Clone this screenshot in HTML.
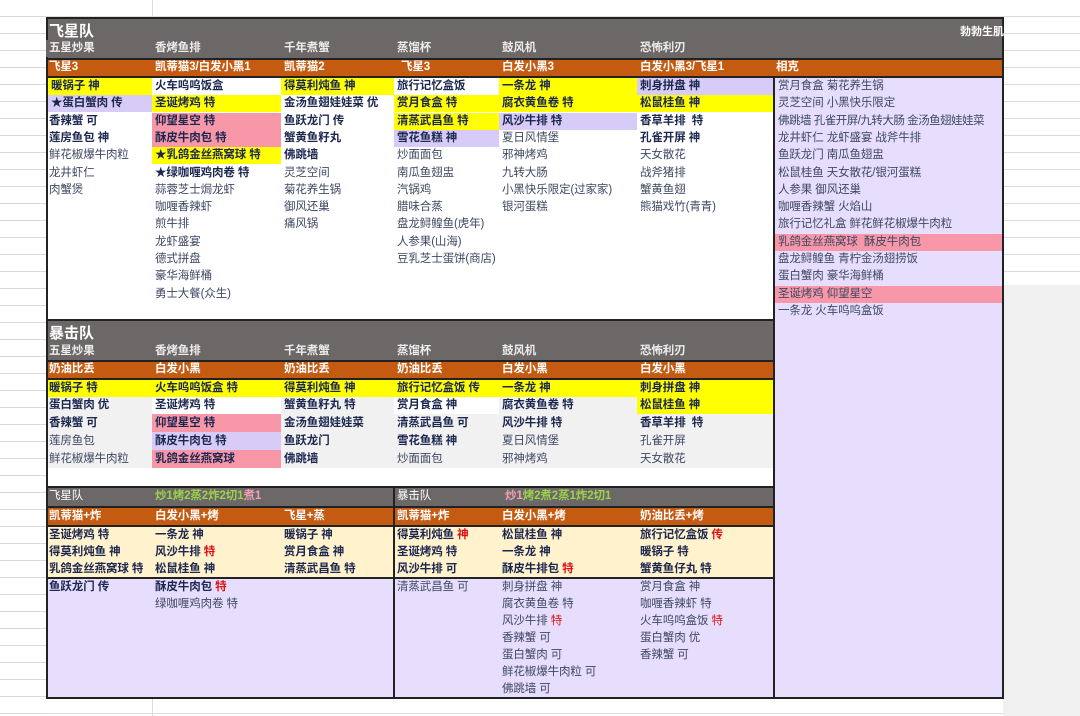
<!DOCTYPE html>
<html><head><meta charset="utf-8"><style>
*{margin:0;padding:0;box-sizing:border-box}
body{width:1080px;height:716px;overflow:hidden;position:relative;background:#fff;font-family:"Liberation Sans","Noto Sans CJK SC",sans-serif;
background-image:repeating-linear-gradient(to bottom,transparent 0,transparent 16px,#dcdcdc 16px,#dcdcdc 17px),linear-gradient(to right,transparent 0,transparent 152px,#dcdcdc 152px,#dcdcdc 153px,transparent 153px);}
.a{position:absolute}
.c{position:absolute;height:17px;line-height:17px;font-size:11.5px;padding-left:3px;white-space:nowrap;color:#3e4863;letter-spacing:-0.1px}
.b{font-weight:bold;color:#1c2750}
.Y{background:#ffff00}.L{background:#d6ccf7}.P{background:#f797a8}.G{background:#f1f1f1}.W{background:#fff}
.gh{background:#6c6868;color:#ececec;font-weight:bold}
.or{background:#c55a11;color:#fff;font-weight:bold}
.r{color:#e01010;font-weight:bold}
.rn{color:#e01010}
</style></head><body>
<div class="a" style="left:1003px;top:285px;width:77px;height:431px;background:#f0f0f0"></div>
<div class="a" style="left:0;top:0;width:46px;height:716px;background-image:repeating-linear-gradient(to bottom,#fff 0,#fff 16px,#d8d8d8 16px,#d8d8d8 17px)"></div>
<div class="a" style="left:46px;top:17px;width:958px;height:682px;border:2px solid #222;background:#fff"></div>
<div class="a gh" style="left:48px;top:19px;width:954px;height:39px"></div>
<div class="a" style="left:49px;top:20px;font-size:15px;font-weight:bold;color:#fff">飞星队</div>
<div class="a" style="left:960px;top:23px;font-size:11px;font-weight:bold;color:#fff">勃勃生肌</div>
<div class="c gh" style="left:46px;top:40px">五星炒果</div>
<div class="c gh" style="left:152px;top:40px">香烤鱼排</div>
<div class="c gh" style="left:281px;top:40px">千年煮蟹</div>
<div class="c gh" style="left:394px;top:40px">蒸馏杯</div>
<div class="c gh" style="left:499px;top:40px">鼓风机</div>
<div class="c gh" style="left:637px;top:40px">恐怖利刃</div>
<div class="a or" style="left:48px;top:58px;width:954px;height:20px;border-top:2px solid #222;border-bottom:2px solid #222"></div>
<div class="c or" style="left:46px;top:59px;background:none">飞星3</div>
<div class="c or" style="left:152px;top:59px;background:none">凯蒂猫3/白发小黑1</div>
<div class="c or" style="left:281px;top:59px;background:none">凯蒂猫2</div>
<div class="c or" style="left:398px;top:59px;background:none">飞星3</div>
<div class="c or" style="left:499px;top:59px;background:none">白发小黑3</div>
<div class="c or" style="left:637px;top:59px;background:none">白发小黑3/飞星1</div>
<div class="c or" style="left:773px;top:59px;background:none">相克</div>
<div class="a" style="left:773px;top:78px;width:229px;height:619px;background:#e7defd;border-left:2px solid #222"></div>
<div class="c b Y" style="left:48px;top:78px;width:104px">暖锅子 神</div>
<div class="c b L" style="left:48px;top:95px;width:104px">★蛋白蟹肉 传</div>
<div class="c b" style="left:46px;top:113px">香辣蟹 可</div>
<div class="c b" style="left:46px;top:130px">莲房鱼包 神</div>
<div class="c" style="left:46px;top:147px">鲜花椒爆牛肉粒</div>
<div class="c" style="left:46px;top:165px">龙井虾仁</div>
<div class="c" style="left:46px;top:182px">肉蟹煲</div>
<div class="c b" style="left:152px;top:78px">火车呜呜饭盒</div>
<div class="c b Y" style="left:152px;top:95px;width:129px">圣诞烤鸡 特</div>
<div class="c b P" style="left:152px;top:113px;width:129px">仰望星空 特</div>
<div class="c b P" style="left:152px;top:130px;width:129px">酥皮牛肉包 特</div>
<div class="c b Y" style="left:152px;top:147px;width:129px">★乳鸽金丝燕窝球 特</div>
<div class="c b" style="left:152px;top:165px">★绿咖喱鸡肉卷 特</div>
<div class="c" style="left:152px;top:182px">蒜蓉芝士焗龙虾</div>
<div class="c" style="left:152px;top:199px">咖喱香辣虾</div>
<div class="c" style="left:152px;top:216px">煎牛排</div>
<div class="c" style="left:152px;top:234px">龙虾盛宴</div>
<div class="c" style="left:152px;top:251px">德式拼盘</div>
<div class="c" style="left:152px;top:268px">豪华海鲜桶</div>
<div class="c" style="left:152px;top:286px">勇士大餐(众生)</div>
<div class="c b Y" style="left:281px;top:78px;width:113px">得莫利炖鱼 神</div>
<div class="c b" style="left:281px;top:95px">金汤鱼翅娃娃菜 优</div>
<div class="c b" style="left:281px;top:113px">鱼跃龙门 传</div>
<div class="c b" style="left:281px;top:130px">蟹黄鱼籽丸</div>
<div class="c b" style="left:281px;top:147px">佛跳墙</div>
<div class="c" style="left:281px;top:165px">灵芝空间</div>
<div class="c" style="left:281px;top:182px">菊花养生锅</div>
<div class="c" style="left:281px;top:199px">御风还巢</div>
<div class="c" style="left:281px;top:216px">痛风锅</div>
<div class="c b" style="left:394px;top:78px">旅行记忆盒饭</div>
<div class="c b Y" style="left:394px;top:95px;width:105px">赏月食盒 特</div>
<div class="c b Y" style="left:394px;top:113px;width:105px">清蒸武昌鱼 特</div>
<div class="c b L" style="left:394px;top:130px;width:105px">雪花鱼糕 神</div>
<div class="c" style="left:394px;top:147px">炒面面包</div>
<div class="c" style="left:394px;top:165px">南瓜鱼翅盅</div>
<div class="c" style="left:394px;top:182px">汽锅鸡</div>
<div class="c" style="left:394px;top:199px">腊味合蒸</div>
<div class="c" style="left:394px;top:216px">盘龙鲟鳇鱼(虎年)</div>
<div class="c" style="left:394px;top:234px">人参果(山海)</div>
<div class="c" style="left:394px;top:251px">豆乳芝士蛋饼(商店)</div>
<div class="c b Y" style="left:499px;top:78px;width:138px">一条龙 神</div>
<div class="c b Y" style="left:499px;top:95px;width:138px">腐衣黄鱼卷 特</div>
<div class="c b L" style="left:499px;top:113px;width:138px">风沙牛排 特</div>
<div class="c" style="left:499px;top:130px">夏日风情堡</div>
<div class="c" style="left:499px;top:147px">邪神烤鸡</div>
<div class="c" style="left:499px;top:165px">九转大肠</div>
<div class="c" style="left:499px;top:182px">小黑快乐限定(过家家)</div>
<div class="c" style="left:499px;top:199px">银河蛋糕</div>
<div class="c b L" style="left:637px;top:78px;width:136px">刺身拼盘 神</div>
<div class="c b Y" style="left:637px;top:95px;width:136px">松鼠桂鱼 神</div>
<div class="c b" style="left:637px;top:113px">香草羊排&nbsp; 特</div>
<div class="c b" style="left:637px;top:130px">孔雀开屏 神</div>
<div class="c" style="left:637px;top:147px">天女散花</div>
<div class="c" style="left:637px;top:165px">战斧猪排</div>
<div class="c" style="left:637px;top:182px">蟹黄鱼翅</div>
<div class="c" style="left:637px;top:199px">熊猫戏竹(青青)</div>
<div class="c" style="left:775px;top:78px">赏月食盒 菊花养生锅</div>
<div class="c" style="left:775px;top:95px">灵芝空间 小黑快乐限定</div>
<div class="c" style="left:775px;top:113px;letter-spacing:-0.5px">佛跳墙 孔雀开屏/九转大肠 金汤鱼翅娃娃菜</div>
<div class="c" style="left:775px;top:130px">龙井虾仁 龙虾盛宴 战斧牛排</div>
<div class="c" style="left:775px;top:147px">鱼跃龙门 南瓜鱼翅盅</div>
<div class="c" style="left:775px;top:165px">松鼠桂鱼 天女散花/银河蛋糕</div>
<div class="c" style="left:775px;top:182px">人参果 御风还巢</div>
<div class="c" style="left:775px;top:199px">咖喱香辣蟹 火焰山</div>
<div class="c" style="left:775px;top:216px">旅行记忆礼盒 鲜花鲜花椒爆牛肉粒</div>
<div class="c P" style="left:775px;top:234px;width:227px">乳鸽金丝燕窝球&nbsp; 酥皮牛肉包</div>
<div class="c" style="left:775px;top:251px">盘龙鲟鳇鱼 青柠金汤翅捞饭</div>
<div class="c" style="left:775px;top:268px">蛋白蟹肉 豪华海鲜桶</div>
<div class="c P" style="left:775px;top:286px;width:227px">圣诞烤鸡 仰望星空</div>
<div class="c" style="left:775px;top:303px">一条龙 火车呜呜盒饭</div>

<div class="a" style="left:48px;top:319px;width:725px;height:2px;background:#222"></div>
<div class="a gh" style="left:48px;top:321px;width:725px;height:39px"></div>
<div class="a" style="left:49px;top:322px;font-size:15px;font-weight:bold;color:#fff">暴击队</div>
<div class="c gh" style="left:46px;top:343px;background:none">五星炒果</div>
<div class="c gh" style="left:152px;top:343px;background:none">香烤鱼排</div>
<div class="c gh" style="left:281px;top:343px;background:none">千年煮蟹</div>
<div class="c gh" style="left:394px;top:343px;background:none">蒸馏杯</div>
<div class="c gh" style="left:499px;top:343px;background:none">鼓风机</div>
<div class="c gh" style="left:637px;top:343px;background:none">恐怖利刃</div>
<div class="a or" style="left:48px;top:360px;width:725px;height:20px;border-top:2px solid #222;border-bottom:2px solid #222"></div>
<div class="c or" style="left:46px;top:361px;background:none">奶油比丢</div>
<div class="c or" style="left:152px;top:361px;background:none">白发小黑</div>
<div class="c or" style="left:281px;top:361px;background:none">奶油比丢</div>
<div class="c or" style="left:394px;top:361px;background:none">奶油比丢</div>
<div class="c or" style="left:499px;top:361px;background:none">白发小黑</div>
<div class="c or" style="left:637px;top:361px;background:none">白发小黑</div>
<div class="a G" style="left:48px;top:397px;width:725px;height:71px"></div>
<div class="a Y" style="left:48px;top:380px;width:725px;height:17px"></div>
<div class="a W" style="left:152px;top:397px;width:129px;height:17px"></div>
<div class="a W" style="left:394px;top:397px;width:105px;height:17px"></div>
<div class="a Y" style="left:637px;top:397px;width:136px;height:17px"></div>
<div class="a P" style="left:152px;top:414px;width:129px;height:18px"></div>
<div class="a L" style="left:152px;top:432px;width:129px;height:18px"></div>
<div class="a P" style="left:152px;top:450px;width:129px;height:18px"></div>
<div class="c b" style="left:46px;top:380px">暖锅子 特</div>
<div class="c b" style="left:46px;top:397px">蛋白蟹肉 优</div>
<div class="c b" style="left:46px;top:415px">香辣蟹 可</div>
<div class="c" style="left:46px;top:433px">莲房鱼包</div>
<div class="c" style="left:46px;top:451px">鲜花椒爆牛肉粒</div>
<div class="c b" style="left:152px;top:380px">火车呜呜饭盒 特</div>
<div class="c b" style="left:152px;top:397px">圣诞烤鸡 特</div>
<div class="c b" style="left:152px;top:415px">仰望星空 特</div>
<div class="c b" style="left:152px;top:433px">酥皮牛肉包 特</div>
<div class="c b" style="left:152px;top:451px">乳鸽金丝燕窝球</div>
<div class="c b" style="left:281px;top:380px">得莫利炖鱼 神</div>
<div class="c b" style="left:281px;top:397px">蟹黄鱼籽丸 特</div>
<div class="c b" style="left:281px;top:415px">金汤鱼翅娃娃菜</div>
<div class="c b" style="left:281px;top:433px">鱼跃龙门</div>
<div class="c b" style="left:281px;top:451px">佛跳墙</div>
<div class="c b" style="left:394px;top:380px">旅行记忆盒饭 传</div>
<div class="c b" style="left:394px;top:397px">赏月食盒 神</div>
<div class="c b" style="left:394px;top:415px">清蒸武昌鱼 可</div>
<div class="c b" style="left:394px;top:433px">雪花鱼糕 神</div>
<div class="c" style="left:394px;top:451px">炒面面包</div>
<div class="c b" style="left:499px;top:380px">一条龙 神</div>
<div class="c b" style="left:499px;top:397px">腐衣黄鱼卷 特</div>
<div class="c b" style="left:499px;top:415px">风沙牛排 特</div>
<div class="c" style="left:499px;top:433px">夏日风情堡</div>
<div class="c" style="left:499px;top:451px">邪神烤鸡</div>
<div class="c b" style="left:637px;top:380px">刺身拼盘 神</div>
<div class="c b" style="left:637px;top:397px">松鼠桂鱼 神</div>
<div class="c b" style="left:637px;top:415px">香草羊排&nbsp; 特</div>
<div class="c" style="left:637px;top:433px">孔雀开屏</div>
<div class="c" style="left:637px;top:451px">天女散花</div>

<div class="a" style="left:48px;top:486px;width:725px;height:2px;background:#222"></div>
<div class="a gh" style="left:48px;top:488px;width:725px;height:18px"></div>
<div class="c gh" style="left:46px;top:488px;background:none;font-weight:normal;color:#fff">飞星队</div>
<div class="c" style="left:152px;top:488px;font-weight:bold;color:#9bd34a">炒1烤2蒸2炸2切1<span style="color:#f2a0b4">煮1</span></div>
<div class="c gh" style="left:394px;top:488px;background:none;font-weight:normal;color:#fff">暴击队</div>
<div class="c" style="left:502px;top:488px;font-weight:bold;color:#9bd34a"><span style="color:#f2a0b4">炒1</span>烤2煮2蒸1炸2切1</div>
<div class="a or" style="left:48px;top:506px;width:725px;height:21px;border-top:2px solid #222;border-bottom:2px solid #222"></div>
<div class="c or" style="left:46px;top:508px;background:none">凯蒂猫+炸</div>
<div class="c or" style="left:152px;top:508px;background:none">白发小黑+烤</div>
<div class="c or" style="left:281px;top:508px;background:none">飞星+蒸</div>
<div class="c or" style="left:394px;top:508px;background:none">凯蒂猫+炸</div>
<div class="c or" style="left:499px;top:508px;background:none">白发小黑+烤</div>
<div class="c or" style="left:637px;top:508px;background:none">奶油比丢+烤</div>
<div class="a" style="left:48px;top:527px;width:725px;height:50px;background:#fff2cc"></div>
<div class="a" style="left:48px;top:577px;width:725px;height:2px;background:#222"></div>
<div class="a" style="left:48px;top:579px;width:725px;height:118px;background:#e7defd"></div>
<div class="a" style="left:393px;top:488px;width:2px;height:209px;background:#222"></div>
<div class="c b" style="left:46px;top:527px">圣诞烤鸡 特</div>
<div class="c b" style="left:46px;top:544px">得莫利炖鱼 神</div>
<div class="c b" style="left:46px;top:561px">乳鸽金丝燕窝球 特</div>
<div class="c b" style="left:46px;top:579px">鱼跃龙门 传</div>
<div class="c b" style="left:152px;top:527px">一条龙 神</div>
<div class="c b" style="left:152px;top:544px">风沙牛排 <span class="r">特</span></div>
<div class="c b" style="left:152px;top:561px">松鼠桂鱼 神</div>
<div class="c b" style="left:152px;top:579px">酥皮牛肉包 <span class="r">特</span></div>
<div class="c" style="left:152px;top:596px">绿咖喱鸡肉卷 特</div>
<div class="c b" style="left:281px;top:527px">暖锅子 神</div>
<div class="c b" style="left:281px;top:544px">赏月食盒 神</div>
<div class="c b" style="left:281px;top:561px">清蒸武昌鱼 特</div>
<div class="c b" style="left:394px;top:527px">得莫利炖鱼 <span class="r">神</span></div>
<div class="c b" style="left:394px;top:544px">圣诞烤鸡 特</div>
<div class="c b" style="left:394px;top:561px">风沙牛排 可</div>
<div class="c" style="left:394px;top:579px">清蒸武昌鱼 可</div>
<div class="c b" style="left:499px;top:527px">松鼠桂鱼 神</div>
<div class="c b" style="left:499px;top:544px">一条龙 神</div>
<div class="c b" style="left:499px;top:561px">酥皮牛排包 <span class="r">特</span></div>
<div class="c" style="left:499px;top:579px">刺身拼盘 神</div>
<div class="c" style="left:499px;top:596px">腐衣黄鱼卷 特</div>
<div class="c" style="left:499px;top:613px">风沙牛排 <span class="rn">特</span></div>
<div class="c" style="left:499px;top:630px">香辣蟹 可</div>
<div class="c" style="left:499px;top:647px">蛋白蟹肉 可</div>
<div class="c" style="left:499px;top:664px">鲜花椒爆牛肉粒 可</div>
<div class="c" style="left:499px;top:681px">佛跳墙 可</div>
<div class="c b" style="left:637px;top:527px">旅行记忆盒饭 <span class="r">传</span></div>
<div class="c b" style="left:637px;top:544px">暖锅子 特</div>
<div class="c b" style="left:637px;top:561px">蟹黄鱼仔丸 特</div>
<div class="c" style="left:637px;top:579px">赏月食盒 神</div>
<div class="c" style="left:637px;top:596px">咖喱香辣虾 特</div>
<div class="c" style="left:637px;top:613px">火车呜呜盒饭 <span class="rn">特</span></div>
<div class="c" style="left:637px;top:630px">蛋白蟹肉 优</div>
<div class="c" style="left:637px;top:647px">香辣蟹 可</div>
</body></html>
